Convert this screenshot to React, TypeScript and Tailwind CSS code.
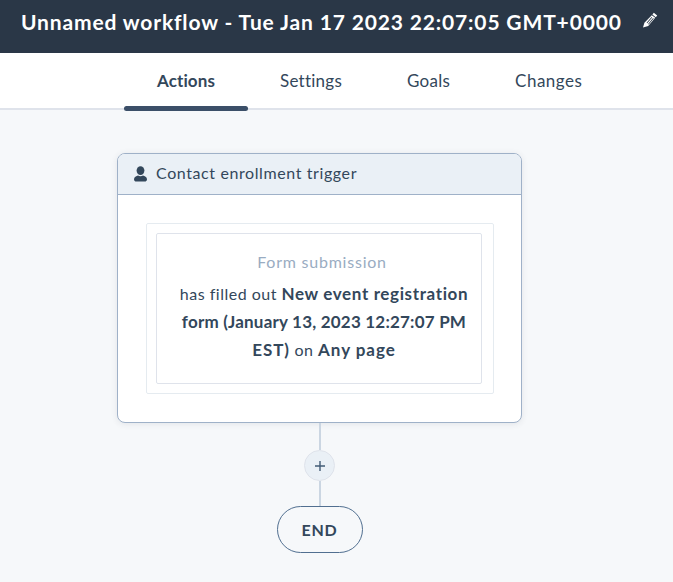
export default function App() {
  const tabs = [
    { label: 'Settings', className: 'pl-[32px] pr-[32px] tracking-[0.25px]' },
    { label: 'Goals', className: 'pl-[33px] pr-[32px] tracking-[0.25px]' },
    { label: 'Changes', className: 'pl-[33px] pr-[32px] tracking-[0.5px]' },
  ]

  return (
    <div className="min-h-[582px] bg-[#f6f8fa] font-['Lato',sans-serif] text-[#33475b]">
      <header className="h-[53px] bg-[#2a3747] flex items-center pl-[21px] text-white">
        <h1 className="text-[21px] font-bold tracking-[0.85px] whitespace-nowrap leading-none -mt-[10px]">
          Unnamed workflow - Tue Jan 17 2023 22:07:05 GMT+0000
        </h1>
        <svg className="ml-[20px] -mt-[13px]" width="16" height="16" viewBox="0 0 16 16" fill="white">
          <path d="M11.8 .8 15.2 3.4 13.8 5.2 10.4 2.6Z" />
          <path fillRule="evenodd" d="M9.8 3.2 13.2 5.8 6.2 14 1 15.6 2.4 10.8ZM9.6 5 4.6 10.8 5.2 11.3 10.2 5.5ZM11.1 6.1 6.1 11.9 6.7 12.4 11.7 6.6Z" />
        </svg>
      </header>

      <nav className="h-[57px] bg-white border-b-2 border-[#dfe3eb] flex pl-[124px]">
        <div className="relative h-[56px] w-[124px] flex items-center justify-center text-[17px] font-bold tracking-[0.1px]">
          Actions
          <div className="absolute left-0 right-0 top-[53px] h-[5px] rounded-[3px] bg-[#3b4f68]" />
        </div>
        {tabs.map((tab) => (
          <div key={tab.label} className={`h-[56px] flex items-center text-[17px] ${tab.className}`}>
            {tab.label}
          </div>
        ))}
      </nav>

      <main className="w-[405px] ml-[117px] pt-[43px] flex flex-col items-center">
        <section className="w-full h-[270px] bg-white border border-[#9fb1c8] rounded-[8px] shadow-[0_1px_6px_rgba(45,62,80,0.1)] overflow-hidden">
          <div className="h-[41px] bg-[#eaf0f6] border-b border-[#9fb1c8] flex items-center pl-[15px] gap-[8px]">
            <svg width="15" height="16" viewBox="0 0 15 16" fill="#33475b">
              <ellipse cx="7.5" cy="4.6" rx="3.9" ry="4.4" />
              <path d="M1 13.2C1 11 3.4 9.9 5 9.5 6.4 10.5 8.6 10.5 10 9.5 11.6 9.9 14 11 14 13.2 14 14.9 13 15.6 11.6 15.6H3.4C2 15.6 1 14.9 1 13.2Z" />
            </svg>
            <span className="text-[16px] tracking-[0.6px] -mt-[2px]">Contact enrollment trigger</span>
          </div>
          <div className="pt-[28px] px-[28px]">
            <div className="w-[348px] h-[171px] border border-[#e5ebf0] rounded-[2px] pt-[9px] pl-[9px] pr-[11px]">
              <div className="h-[151px] border border-[#dfe3eb] rounded-[2px] flex flex-col items-center text-center pl-[6px]">
                <div className="mt-[14px] h-[28px] leading-[28px] text-[16px] tracking-[0.77px] text-[#99acc2]">
                  Form submission
                </div>
                <p className="mt-[4px] ml-[4px] w-[304px] text-[16px] leading-[28px] tracking-[0.5px]">
                  has filled out{' '}
                  <b className="text-[17px] tracking-[0.63px]">New event registration </b>
                  <b className="text-[17px] tracking-[0.2px]">form (January 13, 2023 12:27:07 PM </b>
                  <b className="text-[17px] tracking-[0.9px]">EST)</b> on{' '}
                  <b className="text-[17px] tracking-[0.95px]">Any page</b>
                </p>
              </div>
            </div>
          </div>
        </section>

        <div className="w-[2px] h-[27px] bg-[#cbd6e2]" />
        <div className="w-[31px] h-[31px] rounded-full bg-[#eaf0f6] border border-[#dfe3eb] flex items-center justify-center">
          <svg width="12" height="12" viewBox="0 0 12 12" stroke="#425b76" strokeWidth="1.4">
            <path d="M6 1V11M1 6H11" />
          </svg>
        </div>
        <div className="w-[2px] h-[25px] bg-[#cbd6e2]" />
        <div className="w-[86px] h-[47px] rounded-full border border-[#516f90] flex items-center justify-center text-[16px] font-bold tracking-[0.8px]">
          END
        </div>
      </main>
    </div>
  )
}
